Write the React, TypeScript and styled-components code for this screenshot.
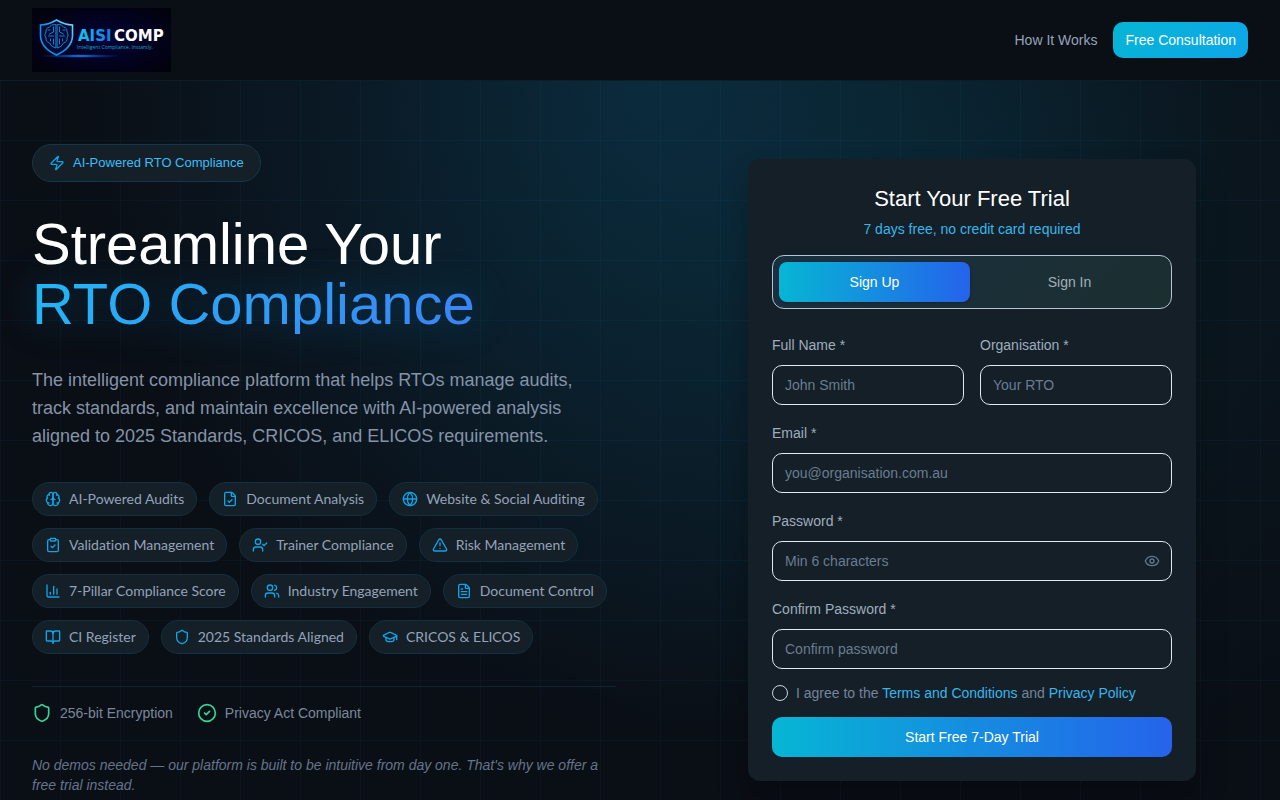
import React from 'react';
import styled, { createGlobalStyle } from 'styled-components';
import {
  BookOpen, ChartColumn, CircleCheck, ClipboardCheck, Eye, FileCheck, FileText,
  Globe, GraduationCap, Shield, TriangleAlert, UserCheck, Users, Zap,
} from 'lucide-react';

const GlobalStyle = createGlobalStyle`
  *, *::before, *::after { box-sizing: border-box; }
  body {
    margin: 0;
    background: #0a0e15;
    color: #fff;
    font-family: "Liberation Sans", Arial, sans-serif;
    font-size: 14px;
    line-height: 20px;
  }
  h1, h2, p { margin: 0; font-weight: 400; }
  button, input { font: inherit; }
  a { text-decoration: none; }
`;

const Header = styled.header`
  position: relative;
  z-index: 1;
  background: #0a0e15;
  box-shadow: 0 1px 0 #0b1f2b;
`;

const HeaderInner = styled.div`
  display: flex;
  align-items: center;
  justify-content: space-between;
  max-width: 1280px;
  height: 80px;
  margin: 0 auto;
  padding: 0 32px;
`;

const LogoLink = styled.a`
  display: block;
  height: 64px;
`;

const Nav = styled.nav`
  display: flex;
  align-items: center;
  gap: 16px;
`;

const NavLink = styled.a`
  color: #94a3b8;
`;

const NavButton = styled.button`
  height: 36px;
  padding: 0 12px;
  border: 0;
  border-radius: 10px;
  color: #fff;
  background: linear-gradient(135deg, #06b6d4, #0ea5e9);
`;

const Hero = styled.main`
  background:
    linear-gradient(rgba(14, 165, 233, 0.05) 1px, transparent 1px) 0 0 / 60px 60px,
    linear-gradient(90deg, rgba(14, 165, 233, 0.05) 1px, transparent 1px) 0 0 / 60px 60px,
    radial-gradient(ellipse 46% 84% at 51% 0%, rgba(14, 165, 233, 0.16), transparent),
    radial-gradient(ellipse 50% 74% at 75% 20%, rgba(6, 182, 212, 0.08), transparent),
    #0a0e15;
`;

const HeroInner = styled.div`
  display: grid;
  grid-template-columns: 1fr 1fr;
  align-items: center;
  gap: 48px;
  max-width: 1280px;
  margin: 0 auto;
  padding: 64px 32px;
`;

const Badge = styled.div`
  display: inline-flex;
  align-items: center;
  gap: 8px;
  height: 38px;
  padding: 0 16px;
  border: 1px solid #12384b;
  border-radius: 19px;
  background: #141f28;
  color: #38bdf8;
  font-size: 13px;
  vertical-align: top;
  svg { color: #0ea5e9; }
`;

const Headline = styled.h1`
  margin-top: 32px;
  font-size: 58px;
  line-height: 60px;
`;

const HeadlineAccent = styled.span`
  display: block;
  width: fit-content;
  background: linear-gradient(135deg, #22b8f5, #3b82f6);
  background-clip: text;
  color: transparent;
  filter: drop-shadow(0 0 20px rgba(6, 120, 180, 0.45));
`;

const Lead = styled.p`
  max-width: 576px;
  margin-top: 32px;
  color: #8593a7;
  font-size: 18px;
  line-height: 28px;
`;

const ChipList = styled.ul`
  display: flex;
  flex-wrap: wrap;
  gap: 12px;
  margin: 32px 0 0;
  padding: 0;
  list-style: none;
`;

const Chip = styled.li`
  display: flex;
  align-items: center;
  gap: 8px;
  height: 34px;
  padding: 0 12px;
  border: 1px solid #12303f;
  border-radius: 17px;
  background: #141f28;
  color: #94a3b8;
  font-family: Lato, "Liberation Sans", sans-serif;
  font-variant-ligatures: none;
  svg { color: #0ea5e9; }
`;

const TrustRow = styled.div`
  display: flex;
  gap: 24px;
  margin-top: 32px;
  padding-top: 16px;
  border-top: 1px solid #10242f;
`;

const TrustItem = styled.div`
  display: flex;
  align-items: center;
  gap: 8px;
  color: #7a889c;
  svg { color: #34d399; }
`;

const Note = styled.p`
  margin-top: 32px;
  color: #64748b;
  font-style: italic;
`;

const CardColumn = styled.div`
  display: flex;
  justify-content: center;
  padding-left: 32px;
`;

const Card = styled.section`
  width: 100%;
  max-width: 448px;
  padding: 24px;
  border-radius: 12px;
  background: #141f28;
  box-shadow: 0 20px 30px rgba(0, 0, 0, 0.25);
`;

const CardTitle = styled.h2`
  font-size: 22px;
  line-height: 32px;
  text-align: center;
`;

const CardSubtitle = styled.p`
  margin-top: 4px;
  color: #38b6ea;
  text-align: center;
`;

const Tabs = styled.div`
  display: grid;
  grid-template-columns: 1fr 1fr;
  gap: 4px;
  margin-top: 16px;
  padding: 6px;
  border: 1px solid #b4c3d5;
  border-radius: 12px;
  background: linear-gradient(135deg, #1a2f40, #1b2f30);
`;

const Tab = styled.button<{ $active?: boolean }>`
  height: 40px;
  border: 0;
  border-radius: 8px;
  color: ${p => (p.$active ? '#fff' : '#a3b0b8')};
  background: ${p => (p.$active ? 'linear-gradient(90deg, #06b6d4, #2563eb)' : 'transparent')};
  box-shadow: ${p => (p.$active ? '0 1px 3px rgba(0, 0, 0, 0.3)' : 'none')};
`;

const Form = styled.form`
  display: flex;
  flex-direction: column;
  gap: 16px;
  margin-top: 24px;
`;

const FieldPair = styled.div`
  display: grid;
  grid-template-columns: 1fr 1fr;
  gap: 16px;
`;

const FieldBox = styled.div`
  display: flex;
  flex-direction: column;
  gap: 8px;
  min-width: 0;
`;

const Label = styled.label`
  color: #9fadbd;
  line-height: 24px;
`;

const InputWrap = styled.div`
  position: relative;
`;

const Input = styled.input`
  display: block;
  width: 100%;
  height: 40px;
  padding: 0 12px;
  border: 1px solid #e2e8f0;
  border-radius: 10px;
  background: transparent;
  color: #fff;
  &::placeholder { color: #6b7c91; opacity: 1; }
`;

const RevealButton = styled.button`
  position: absolute;
  top: 0;
  right: 0;
  display: flex;
  align-items: center;
  height: 40px;
  padding: 0 12px;
  border: 0;
  background: none;
  color: #64748b;
`;

const Consent = styled.div`
  display: flex;
  align-items: center;
  gap: 8px;
  height: 16px;
  color: #74849a;
  a { color: #38b6ea; }
`;

const Checkbox = styled.input`
  appearance: none;
  width: 16px;
  height: 16px;
  margin: 0;
  border: 1px solid #cbd5e1;
  border-radius: 50%;
`;

const Submit = styled.button`
  height: 40px;
  border: 0;
  border-radius: 10px;
  color: #fff;
  background: linear-gradient(90deg, #06b6d4, #2563eb);
`;

function Logo() {
  return (
    <svg width="139" height="64" viewBox="0 0 139 64" role="img" aria-label="AISI COMP">
      <defs>
        <radialGradient id="logoBg" cx="50%" cy="50%" r="60%">
          <stop offset="0" stopColor="#03043a" />
          <stop offset="0.6" stopColor="#02021f" />
          <stop offset="1" stopColor="#02020f" />
        </radialGradient>
        <linearGradient id="logoShield" x1="0" y1="1" x2="1" y2="0">
          <stop offset="0" stopColor="#0a8fe8" />
          <stop offset="0.5" stopColor="#1296ea" />
          <stop offset="1" stopColor="#7fe9f5" />
        </linearGradient>
        <linearGradient id="logoWord" x1="0" y1="0" x2="1" y2="0">
          <stop offset="0" stopColor="#14c8ea" />
          <stop offset="1" stopColor="#1478e0" />
        </linearGradient>
        <radialGradient id="logoFlare">
          <stop offset="0" stopColor="#35b4ff" />
          <stop offset="0.4" stopColor="#0b5fd0" stopOpacity="0.7" />
          <stop offset="1" stopColor="#0530a0" stopOpacity="0" />
        </radialGradient>
      </defs>
      <rect width="139" height="64" fill="url(#logoBg)" />
      <ellipse cx="48" cy="48" rx="42" ry="2" fill="url(#logoFlare)" />
      <path d="M24.500 12 Q16 17 8.500 17 V28 Q9 40 24.500 47 Q40 40 40.500 28 V17 Q33 17 24.500 12Z" fill="#030a35" stroke="url(#logoShield)" strokeWidth="1.600" />
      <g fill="none" stroke="#1a8fd8" strokeWidth="0.900" strokeLinecap="round" strokeLinejoin="round">
        <path d="M23.500 16.500 Q19 16 17.500 19 Q13.500 20 14 24 Q11.500 27 14 30 Q13.500 34 17.500 35 Q19 39 23.500 40Z" />
        <path d="M25.500 16.500 Q30 16 31.500 19 Q35.500 20 35 24 Q37.500 27 35 30 Q35.500 34 31.500 35 Q30 39 25.500 40Z" />
        <path d="M21.500 19v5l-4 2M21.500 28h-5M21.500 31v5M18 22h-2M18.500 31v2" />
        <path d="M27.500 19v5l4 2M27.500 28h5M27.500 31v5M31 22h2M30.500 31v2" />
      </g>
      <text x="46" y="33" fill="url(#logoWord)" fontFamily="DejaVu Sans, sans-serif" fontWeight="700" fontSize="15">AISI</text>
      <text x="82" y="33" fill="#fff" fontFamily="DejaVu Sans, sans-serif" fontWeight="700" fontSize="15">COMP</text>
      <text x="45" y="41" fill="#1fa3c4" fontFamily="Open Sans, sans-serif" fontSize="5">Intelligent Compliance. Instantly.</text>
    </svg>
  );
}

function Brain({ size }: { size: number }) {
  return (
    <svg width={size} height={size} viewBox="0 0 24 24" fill="none" stroke="currentColor" strokeWidth="2" strokeLinecap="round" strokeLinejoin="round" aria-hidden="true">
      <path d="M12 5a3 3 0 1 0-5.997.125 4 4 0 0 0-2.526 5.770 4 4 0 0 0 .556 6.588A4 4 0 1 0 12 18Z" />
      <path d="M12 5a3 3 0 1 1 5.997.125 4 4 0 0 1 2.526 5.770 4 4 0 0 1-.556 6.588A4 4 0 1 1 12 18Z" />
      <path d="M15 13a4.500 4.500 0 0 1-3-4 4.500 4.500 0 0 1-3 4" />
      <path d="M17.599 6.500a3 3 0 0 0 .399-1.375" />
      <path d="M6.003 5.125A3 3 0 0 0 6.401 6.500" />
      <path d="M3.477 10.896a4 4 0 0 1 .585-.396" />
      <path d="M19.938 10.500a4 4 0 0 1 .585.396" />
      <path d="M6 18a4 4 0 0 1-1.967-.516" />
      <path d="M19.967 17.484A4 4 0 0 1 18 18" />
    </svg>
  );
}

const features = [
  { icon: Brain, text: 'AI-Powered Audits' },
  { icon: FileCheck, text: 'Document Analysis' },
  { icon: Globe, text: 'Website & Social Auditing' },
  { icon: ClipboardCheck, text: 'Validation Management' },
  { icon: UserCheck, text: 'Trainer Compliance' },
  { icon: TriangleAlert, text: 'Risk Management' },
  { icon: ChartColumn, text: '7-Pillar Compliance Score' },
  { icon: Users, text: 'Industry Engagement' },
  { icon: FileText, text: 'Document Control' },
  { icon: BookOpen, text: 'CI Register' },
  { icon: Shield, text: '2025 Standards Aligned' },
  { icon: GraduationCap, text: 'CRICOS & ELICOS' },
];

interface FieldProps {
  id: string;
  label: string;
  placeholder: string;
  type?: string;
  children?: React.ReactNode;
}

function Field({ id, label, placeholder, type = 'text', children }: FieldProps) {
  return (
    <FieldBox>
      <Label htmlFor={id}>{label} *</Label>
      <InputWrap>
        <Input id={id} type={type} placeholder={placeholder} />
        {children}
      </InputWrap>
    </FieldBox>
  );
}

export default function App() {
  return (
    <>
      <GlobalStyle />
      <Header>
        <HeaderInner>
          <LogoLink href="#"><Logo /></LogoLink>
          <Nav>
            <NavLink href="#how">How It Works</NavLink>
            <NavButton type="button">Free Consultation</NavButton>
          </Nav>
        </HeaderInner>
      </Header>
      <Hero>
        <HeroInner>
          <div>
            <Badge><Zap size={16} />AI-Powered RTO Compliance</Badge>
            <Headline>
              Streamline Your
              <HeadlineAccent>RTO Compliance</HeadlineAccent>
            </Headline>
            <Lead>
              The intelligent compliance platform that helps RTOs manage audits, track
              standards, and maintain excellence with AI-powered analysis aligned to 2025
              Standards, CRICOS, and ELICOS requirements.
            </Lead>
            <ChipList>
              {features.map(({ icon: Icon, text }) => (
                <Chip key={text}><Icon size={16} />{text}</Chip>
              ))}
            </ChipList>
            <TrustRow>
              <TrustItem><Shield size={20} />256-bit Encryption</TrustItem>
              <TrustItem><CircleCheck size={20} />Privacy Act Compliant</TrustItem>
            </TrustRow>
            <Note>
              No demos needed — our platform is built to be intuitive from day one. That's why
              we offer a free trial instead.
            </Note>
          </div>
          <CardColumn>
            <Card>
              <CardTitle>Start Your Free Trial</CardTitle>
              <CardSubtitle>7 days free, no credit card required</CardSubtitle>
              <Tabs role="tablist">
                <Tab type="button" role="tab" aria-selected="true" $active>Sign Up</Tab>
                <Tab type="button" role="tab" aria-selected="false">Sign In</Tab>
              </Tabs>
              <Form>
                <FieldPair>
                  <Field id="name" label="Full Name" placeholder="John Smith" />
                  <Field id="organisation" label="Organisation" placeholder="Your RTO" />
                </FieldPair>
                <Field id="email" label="Email" type="email" placeholder="you@organisation.com.au" />
                <Field id="password" label="Password" type="password" placeholder="Min 6 characters">
                  <RevealButton type="button" aria-label="Show password"><Eye size={16} /></RevealButton>
                </Field>
                <Field id="confirm" label="Confirm Password" type="password" placeholder="Confirm password" />
                <Consent>
                  <Checkbox type="checkbox" id="agree" />
                  <label htmlFor="agree">
                    I agree to the <a href="#terms">Terms and Conditions</a> and <a href="#privacy">Privacy Policy</a>
                  </label>
                </Consent>
                <Submit type="submit">Start Free 7-Day Trial</Submit>
              </Form>
            </Card>
          </CardColumn>
        </HeroInner>
      </Hero>
    </>
  );
}
